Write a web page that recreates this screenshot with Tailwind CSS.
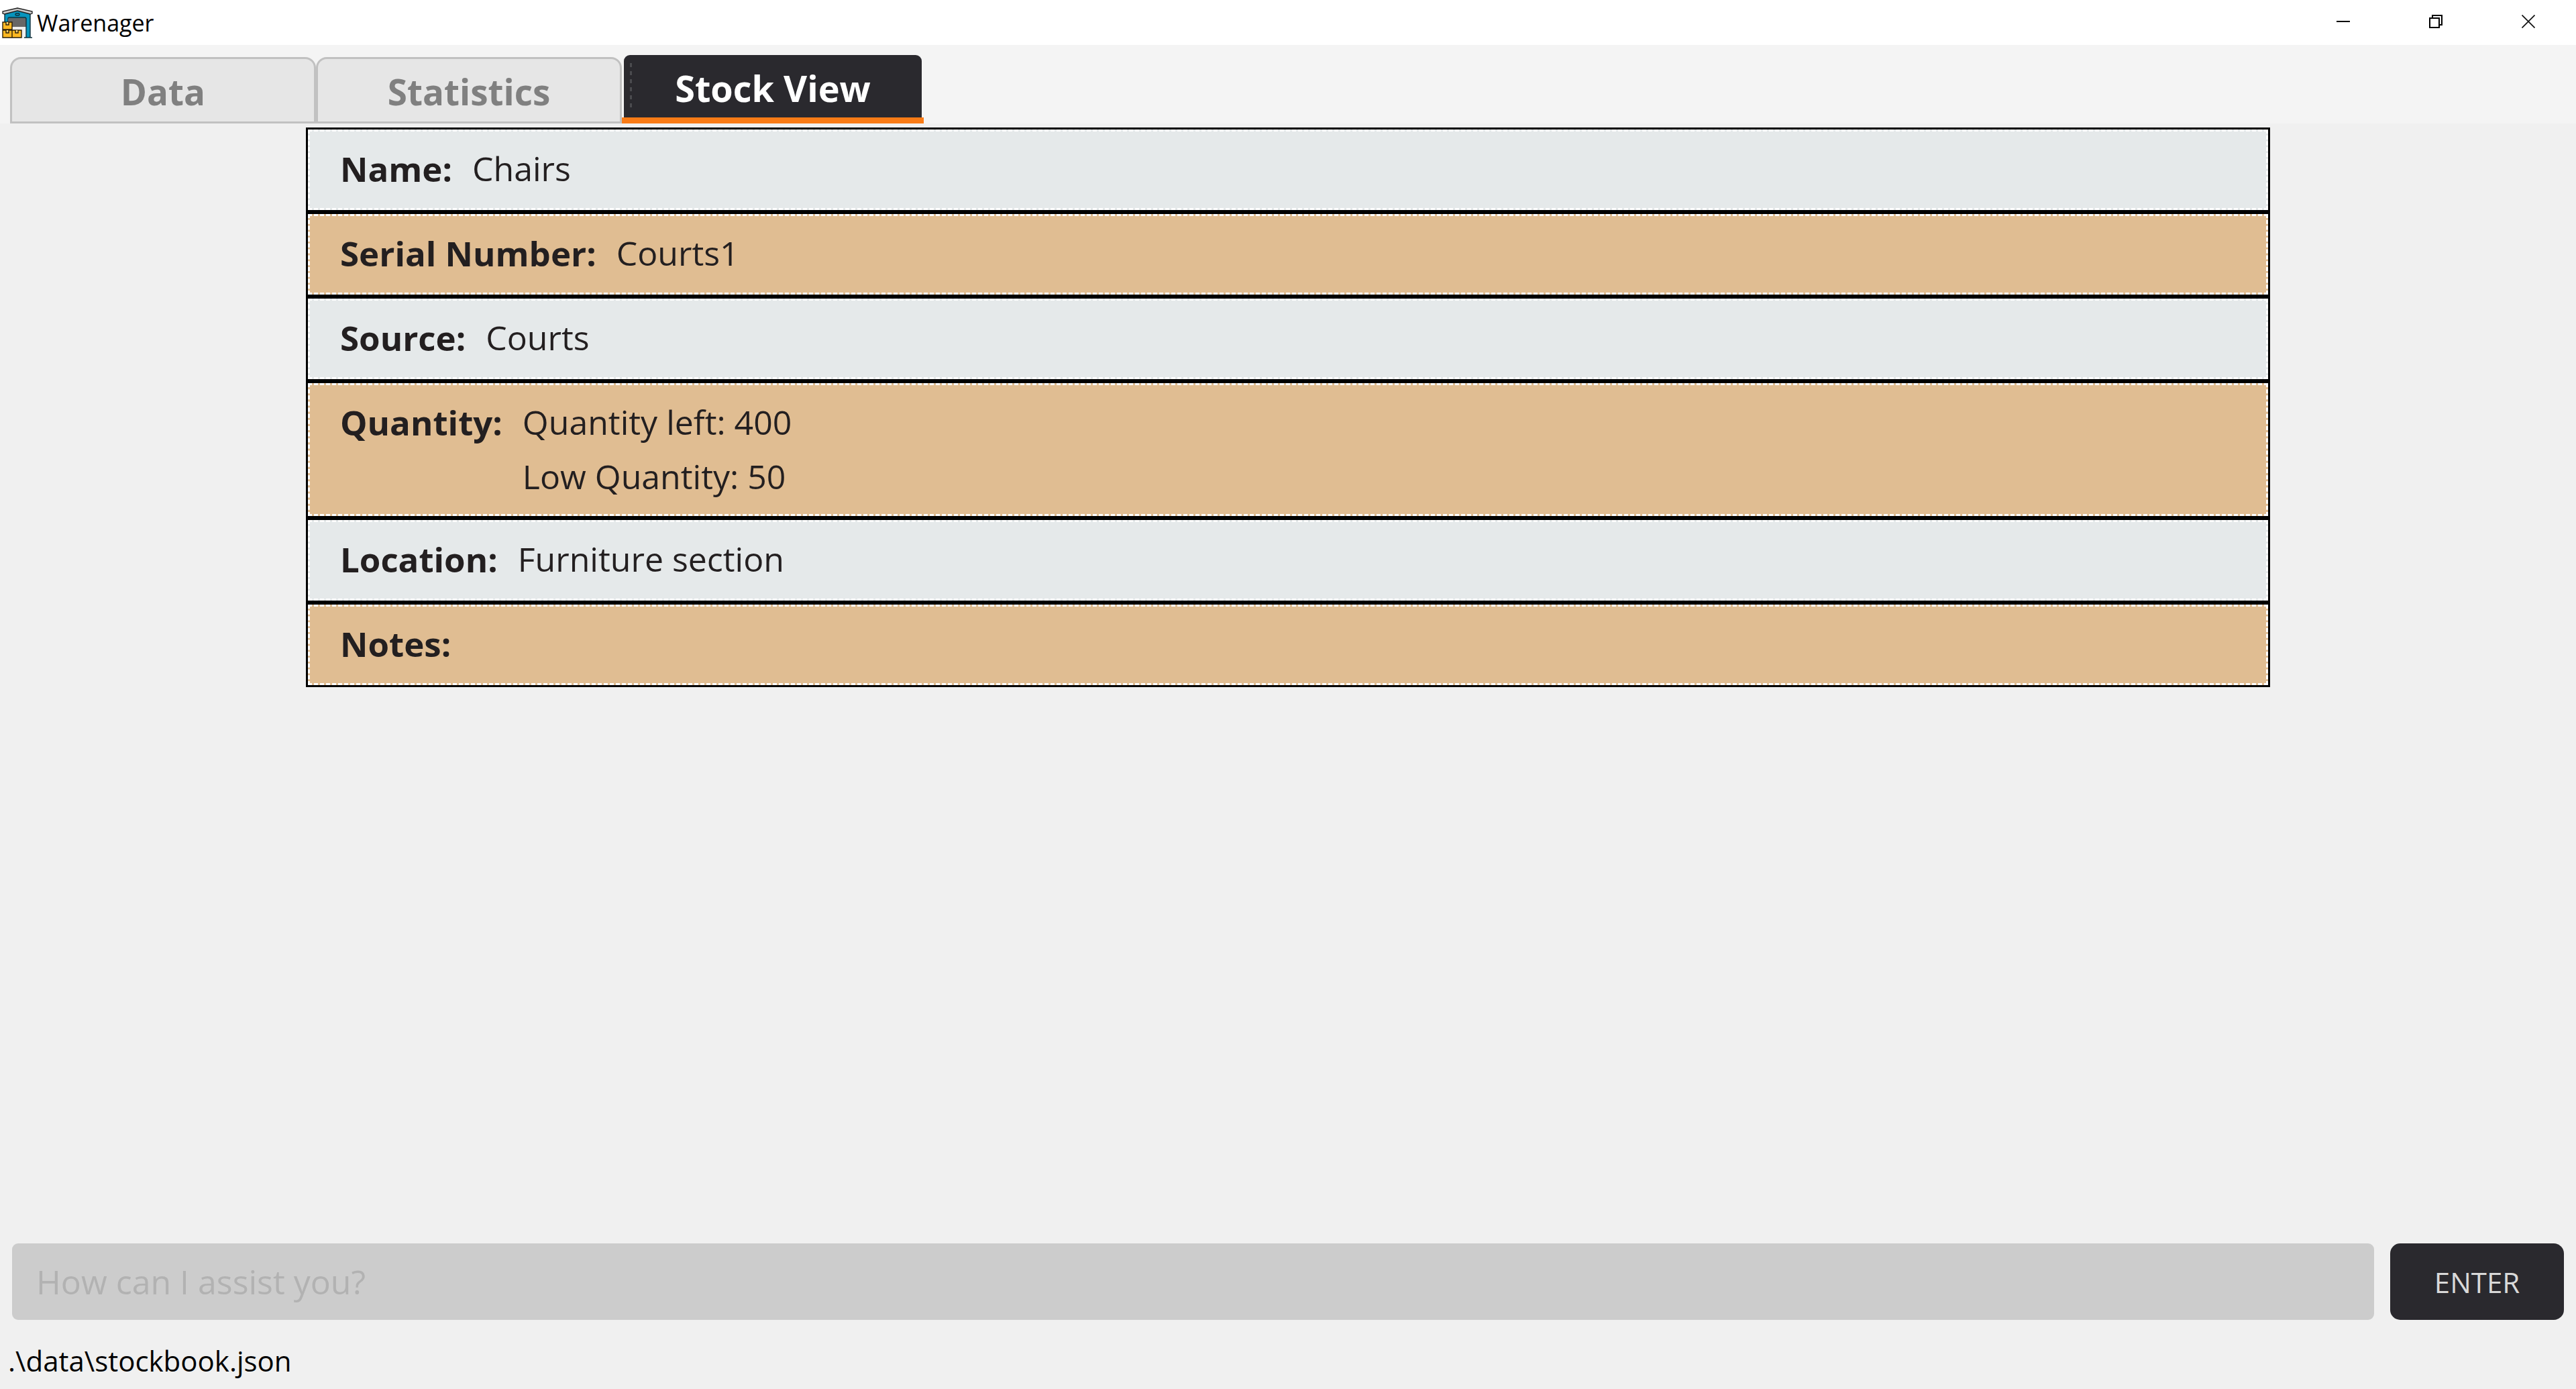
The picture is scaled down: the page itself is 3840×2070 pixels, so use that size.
<!DOCTYPE html>
<html lang="en">
<head>
<meta charset="utf-8">
<title>Warenager</title>
<script src="https://cdn.jsdelivr.net/npm/@tailwindcss/browser@4"></script>
</head>
<body class="flex min-h-screen flex-col bg-[#f0f0f0] font-['Open_Sans','Noto_Sans',sans-serif] text-black">
  <header class="flex h-[67px] items-stretch justify-between bg-white pr-0.5 pl-[3px]">
    <div class="flex items-center gap-1.5">
      <svg class="size-[46px]" viewBox="0 0 46 46" aria-hidden="true">
        <path d="M4 9 23 5l19 4v36H4z" fill="#0795bd"/>
        <path d="M9 16h27v30H9z" fill="#efefef"/>
        <path d="M10 16h26v13H10z" fill="#676767"/>
        <path d="M9 22v-5q0-2 2-2h23q2 0 2 2v28M42 10v35M33 45h12M4 10v12" fill="none" stroke="#10303c" stroke-width="1.4"/>
        <path d="M1 9V6L23 1l22 5v3l-3 1L23 5 4 10z" fill="#c9c9c9" stroke="#202020" stroke-width="1.3"/>
        <rect x="20" y="9" width="6" height="3" rx="1.5" fill="#0795bd" stroke="#10303c" stroke-width="1.4"/>
        <g fill="#fdb822" stroke="#2a2008" stroke-width="1.4">
          <path d="M1 22h14v11H1zM1 34h14v11H1zM15 34h14v11H15z"/>
          <path d="M6 22v4h4v-4M6 34v4h4v-4M20 34v4h4v-4" fill="#fdd271"/>
        </g>
      </svg>
      <h1 class="text-[34px] leading-[42px]">Warenager</h1>
    </div>
    <div class="flex pb-[3px]">
      <button type="button" aria-label="Minimize" class="flex w-[138px] items-center justify-center">
        <svg class="size-5" viewBox="0 0 20 20"><path d="M0 9h20v2H0z"/></svg>
      </button>
      <button type="button" aria-label="Restore" class="flex w-[138px] items-center justify-center">
        <svg class="size-5" viewBox="0 0 20 20" fill="none" stroke="#000" stroke-width="2"><path d="M1 5h14v14H1zM5 5V1h14v14h-4"/></svg>
      </button>
      <button type="button" aria-label="Close" class="flex w-[138px] items-center justify-center">
        <svg class="size-5" viewBox="0 0 20 20" fill="none" stroke="#111" stroke-width="1.7"><path d="m.5.5 19 19M19.500.5l-19 19"/></svg>
      </button>
    </div>
  </header>

  <nav role="tablist" class="flex h-[117px] items-end bg-[#f4f4f4] pl-[15px] text-[53px] leading-none font-bold">
    <button type="button" role="tab" aria-selected="false" class="h-[99px] w-[456px] rounded-t-[16px] border-3 border-[#c1c1c1] bg-[#e6e6e6] pt-1 text-[#808080]">Data</button>
    <button type="button" role="tab" aria-selected="false" class="h-[99px] w-[456px] rounded-t-[16px] border-3 border-[#c1c1c1] bg-[#e6e6e6] pt-1 text-[#808080]">Statistics</button>
    <div class="h-[102px] w-[450px] border-b-9 border-[#f97b16] px-[3px]">
      <button type="button" role="tab" aria-selected="true" class="relative h-full w-full rounded-t-[9px] bg-[#2a292e] pt-1 text-[54px] leading-none text-white">
        <span class="absolute inset-y-3 left-[9px] w-[3px] bg-[repeating-linear-gradient(#4b4b4f_0_6px,transparent_6px_12px)]"></span>
        Stock View
      </button>
    </div>
  </nav>

  <main class="flex-1 px-[456px] pt-1.5">
    <dl class="text-[50px] leading-[81px] text-[#231f20]">
      <div class="border-3 border-black bg-[#e5e9ea]"><div class="flex gap-[30px] border-3 border-dashed border-white px-[45px] pt-[15px] pb-[18px]"><dt class="text-[51px] font-bold">Name:</dt><dd>Chairs</dd></div></div>
      <div class="border-3 border-black bg-[#e0bd92]"><div class="flex gap-[30px] border-3 border-dashed border-white px-[45px] pt-[15px] pb-[18px]"><dt class="text-[51px] font-bold">Serial Number:</dt><dd>Courts1</dd></div></div>
      <div class="border-3 border-black bg-[#e5e9ea]"><div class="flex gap-[30px] border-3 border-dashed border-white px-[45px] pt-[15px] pb-[18px]"><dt class="text-[51px] font-bold">Source:</dt><dd>Courts</dd></div></div>
      <div class="border-3 border-black bg-[#e0bd92]"><div class="flex gap-[30px] border-3 border-dashed border-white px-[45px] py-[15px]"><dt class="text-[51px] font-bold">Quantity:</dt><dd>Quantity left: 400<br>Low Quantity: 50</dd></div></div>
      <div class="border-3 border-black bg-[#e5e9ea]"><div class="flex gap-[30px] border-3 border-dashed border-white px-[45px] pt-[15px] pb-[18px]"><dt class="text-[51px] font-bold">Location:</dt><dd>Furniture section</dd></div></div>
      <div class="border-3 border-black bg-[#e0bd92]"><div class="flex gap-[30px] border-3 border-dashed border-white px-[45px] pt-[15px] pb-[18px]"><dt class="text-[51px] font-bold">Notes:</dt><dd></dd></div></div>
    </dl>
  </main>

  <form class="flex gap-6 px-[18px]">
    <input type="text" aria-label="Command" placeholder="How can I assist you?" class="h-[114px] min-w-0 flex-1 rounded-[9px] bg-[#cccccc] px-9 text-[50px] text-[#231f20] placeholder:text-[#b2b2b2]">
    <button type="button" class="h-[114px] w-[259px] rounded-[15px] bg-[#2a292e] text-[42px] text-[#d9d9d9]">ENTER</button>
  </form>
  <footer class="flex h-[103px] items-center pt-[18px] pl-3 text-[42px] leading-none">.\data\stockbook.json</footer>
</body>
</html>
